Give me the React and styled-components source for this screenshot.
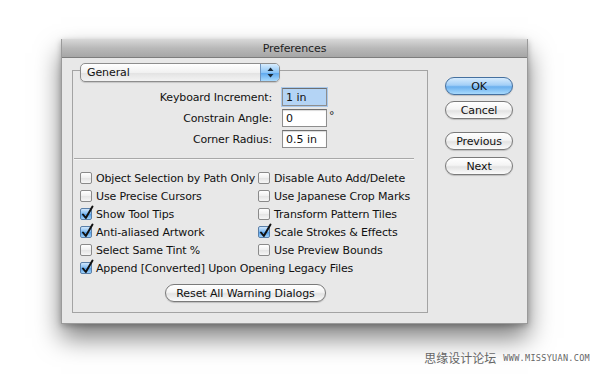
import React from "react";
import styled, { createGlobalStyle } from "styled-components";

const Global = createGlobalStyle`
  html, body { margin: 0; padding: 0; background: #fff; }
  body { font-family: "DejaVu Sans", "Liberation Sans", sans-serif; }
`;

const Page = styled.div`
  width: 600px;
  height: 377px;
  box-sizing: border-box;
  padding: 39px 0 0 61px;
  background: #fff;
  overflow: hidden;
  display: flex;
  flex-direction: column;
`;

const Window = styled.div`
  width: 467px;
  height: 285px;
  box-sizing: border-box;
  background: #e8e8e8;
  border: 1px solid #9a9a9a;
  border-top: none;
  box-shadow: 0 14px 24px rgba(0, 0, 0, 0.5), 0 2px 6px rgba(0, 0, 0, 0.25);
  display: flex;
  flex-direction: column;
`;

const TitleBar = styled.div`
  height: 19px;
  flex: none;
  background: linear-gradient(#d9d9d9, #b9b9b9 50%, #a6a6a6);
  border-bottom: 1px solid #7d7d7d;
  box-sizing: border-box;
  display: flex;
  align-items: center;
  justify-content: center;
  font-size: 11px;
  letter-spacing: -0.1px;
  color: #222;
  padding-top: 1px;
`;

const Body = styled.div`
  flex: 1;
  display: flex;
  padding: 12px 0 10px 10px;
`;

const GroupBox = styled.div`
  width: 356px;
  box-sizing: border-box;
  border: 1px solid #a3a3a3;
  display: flex;
  flex-direction: column;
`;

const Popup = styled.div`
  margin: -8px 0 0 7px;
  width: 200px;
  height: 19px;
  box-sizing: border-box;
  border: 1px solid #8d8d8d;
  border-radius: 5px;
  background: linear-gradient(#ffffff, #f1f1f1 50%, #e2e2e2 51%, #f3f3f3);
  display: flex;
  align-items: center;
  overflow: hidden;
  font-size: 11px;
  letter-spacing: -0.1px;
  color: #111;
  box-shadow: 0 1px 1px rgba(0, 0, 0, 0.15);
`;

const PopupLabel = styled.span`
  flex: 1;
  padding-left: 6px;
`;

const PopupArrows = styled.div`
  width: 18px;
  height: 100%;
  background: linear-gradient(#d7ecfd, #8cc5f7 50%, #5aa6ee 51%, #a9dafd);
  border-left: 1px solid #6f95c0;
  display: flex;
  align-items: center;
  justify-content: center;
`;

const FieldGrid = styled.div`
  display: grid;
  grid-template-columns: 199px 45px auto;
  column-gap: 10px;
  row-gap: 3px;
  margin-top: 6px;
  align-items: center;
`;

const FieldLabel = styled.span`
  text-align: right;
  font-size: 11px;
  letter-spacing: -0.15px;
  color: #111;
`;

const Field = styled.div`
  height: 18px;
  box-sizing: border-box;
  border: 1px solid #8e8e8e;
  border-top-color: #6f6f6f;
  background: ${(p) => (p.$selected ? "#b4d4f5" : "#fff")};
  box-shadow: ${(p) =>
    p.$selected ? "0 0 0 1px #a9c9ec" : "inset 0 1px 1px rgba(0,0,0,0.15)"};
  font-size: 11px;
  color: #111;
  padding: 1px 0 0 3px;
  line-height: 15px;
`;

const Unit = styled.span`
  font-size: 11px;
  color: #222;
  align-self: start;
  margin-left: -8px;
  margin-top: 2px;
  line-height: 10px;
`;

const Separator = styled.div`
  height: 1px;
  background: #a8a8a8;
  border-bottom: 1px solid #f6f6f6;
  margin: 10px 13px 0 1px;
`;

const CheckGrid = styled.div`
  display: grid;
  grid-template-columns: 178px auto;
  grid-auto-rows: 18px;
  margin: 9px 0 0 7px;
`;

const CheckRow = styled.label`
  display: flex;
  align-items: center;
  gap: 4px;
  font-size: 11px;
  letter-spacing: -0.15px;
  color: #111;
  white-space: nowrap;
  grid-column: ${(p) => (p.$wide ? "1 / span 2" : "auto")};
`;

const Box = styled.span`
  position: relative;
  width: 12px;
  height: 12px;
  box-sizing: border-box;
  flex: none;
  border: 1px solid #8a8a8a;
  border-radius: 2px;
  background: ${(p) =>
    p.$on
      ? "linear-gradient(#cfe6fc, #7db9f1 50%, #4f9be8 51%, #9fd2fb)"
      : "linear-gradient(#ffffff, #efefef 50%, #e4e4e4 51%, #f6f6f6)"};
  border-color: ${(p) => (p.$on ? "#5a7fa8" : "#8a8a8a")};
`;

const Tick = styled.svg`
  position: absolute;
  left: 0px;
  top: -4px;
  overflow: visible;
`;

const ResetButton = styled.div`
  align-self: flex-start;
  margin: 7px 0 0 92px;
`;

const Pill = styled.div`
  width: ${(p) => p.$w}px;
  height: 18px;
  box-sizing: border-box;
  border-radius: 9px;
  border: 1px solid ${(p) => (p.$default ? "#45709f" : "#7a7a7a")};
  background: ${(p) =>
    p.$default
      ? "linear-gradient(#d6ebfd, #a3cff7 45%, #6bb0ee 55%, #a8dafd)"
      : "linear-gradient(#ffffff, #f4f4f4 45%, #e3e3e3 55%, #fbfbfb)"};
  box-shadow: 0 1px 1px rgba(0, 0, 0, 0.18);
  display: flex;
  align-items: center;
  justify-content: center;
  font-size: 11px;
  letter-spacing: -0.1px;
  color: #111;
`;

const ButtonCol = styled.div`
  display: flex;
  flex-direction: column;
  margin: 7px 0 0 17px;
`;

const ButtonSlot = styled.div`
  margin-top: ${(p) => p.$gap || 0}px;
`;

const Watermark = styled.div`
  display: flex;
  align-items: center;
  gap: 7px;
  margin-top: 25px;
  align-self: flex-end;
  margin-right: 10px;
`;

const WmCn = styled.span`
  font-family: "Noto Sans CJK SC", sans-serif;
  font-size: 12px;
  color: #666;
`;

const WmUrl = styled.span`
  font-family: "DejaVu Sans Mono", monospace;
  font-size: 8.5px;
  color: #666;
  letter-spacing: 0.3px;
`;

function Check({ on }) {
  return (
    <Box $on={on}>
      {on && (
        <Tick width="14" height="16" viewBox="0 0 14 16">
          <path
            d="M2 9.5 L4.8 13 L11.5 1.5"
            fill="none"
            stroke="#111"
            strokeWidth="2"
            strokeLinecap="round"
            strokeLinejoin="round"
          />
        </Tick>
      )}
    </Box>
  );
}

const checks = [
  ["Object Selection by Path Only", false],
  ["Disable Auto Add/Delete", false],
  ["Use Precise Cursors", false],
  ["Use Japanese Crop Marks", false],
  ["Show Tool Tips", true],
  ["Transform Pattern Tiles", false],
  ["Anti-aliased Artwork", true],
  ["Scale Strokes & Effects", true],
  ["Select Same Tint %", false],
  ["Use Preview Bounds", false],
];

export default function App() {
  return (
    <>
      <Global />
      <Page>
        <Window>
          <TitleBar>Preferences</TitleBar>
          <Body>
            <GroupBox>
              <Popup>
                <PopupLabel>General</PopupLabel>
                <PopupArrows>
                  <svg width="7" height="11" viewBox="0 0 7 11">
                    <path d="M3.5 0.5 L6.5 4 L0.5 4 Z" fill="#1a2a3a" />
                    <path d="M3.5 10.5 L6.5 7 L0.5 7 Z" fill="#1a2a3a" />
                  </svg>
                </PopupArrows>
              </Popup>
              <FieldGrid>
                <FieldLabel>Keyboard Increment:</FieldLabel>
                <Field $selected>1 in</Field>
                <span />
                <FieldLabel>Constrain Angle:</FieldLabel>
                <Field>0</Field>
                <Unit>°</Unit>
                <FieldLabel>Corner Radius:</FieldLabel>
                <Field>0.5 in</Field>
                <span />
              </FieldGrid>
              <Separator />
              <CheckGrid>
                {checks.map(([t, on]) => (
                  <CheckRow key={t}>
                    <Check on={on} />
                    {t}
                  </CheckRow>
                ))}
                <CheckRow $wide>
                  <Check on />
                  Append [Converted] Upon Opening Legacy Files
                </CheckRow>
              </CheckGrid>
              <ResetButton>
                <Pill $w={161}>Reset All Warning Dialogs</Pill>
              </ResetButton>
            </GroupBox>
            <ButtonCol>
              <ButtonSlot>
                <Pill $w={68} $default>OK</Pill>
              </ButtonSlot>
              <ButtonSlot $gap={6}>
                <Pill $w={68}>Cancel</Pill>
              </ButtonSlot>
              <ButtonSlot $gap={13}>
                <Pill $w={68}>Previous</Pill>
              </ButtonSlot>
              <ButtonSlot $gap={7}>
                <Pill $w={68}>Next</Pill>
              </ButtonSlot>
            </ButtonCol>
          </Body>
        </Window>
        <Watermark>
          <WmCn>思缘设计论坛</WmCn>
          <WmUrl>WWW.MISSYUAN.COM</WmUrl>
        </Watermark>
      </Page>
    </>
  );
}
